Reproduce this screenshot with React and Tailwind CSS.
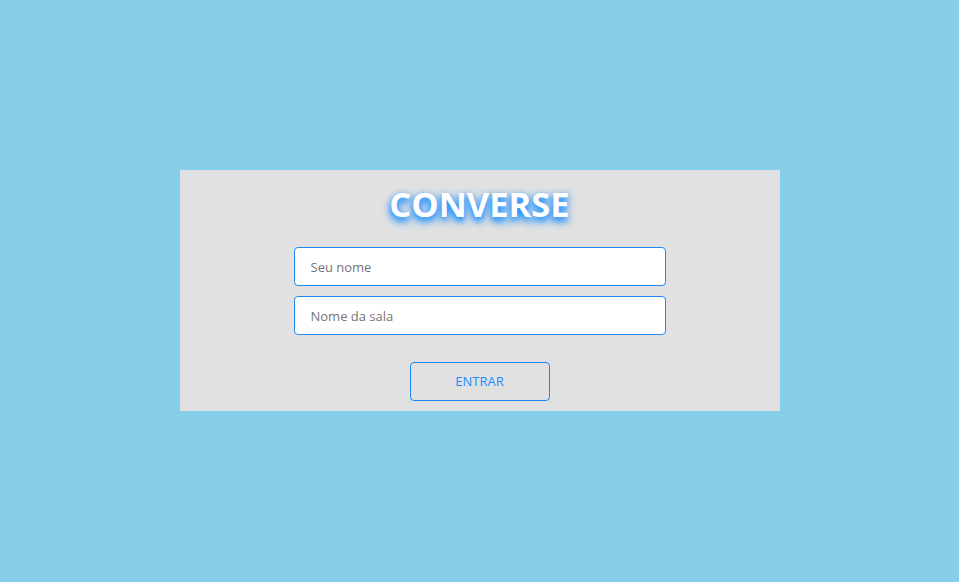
export default function App() {
  return (
    <div className="w-full h-[582px] bg-[#87ceeb] flex flex-col items-center pt-[170px]" style={{ fontFamily: '"Open Sans", "Noto Sans", sans-serif' }}>
      <div className="w-[600px] h-[241px] bg-[#e1e1e1] flex flex-col items-center">
        <h1 className="mt-[13px] h-[42px] flex items-center text-[34.5px] font-bold text-white leading-none [text-shadow:0_4px_10px_#1e90ff,0_3px_6px_#1e90ff]">CONVERSE</h1>
        <input placeholder="Seu nome" className="mt-[22px] w-[372px] h-[39px] bg-white border border-[#1e88f5] rounded-[4px] px-[16px] text-[13px] text-[#333] placeholder:text-[#757575] outline-none" />
        <input placeholder="Nome da sala" className="mt-[10px] w-[372px] h-[39px] bg-white border border-[#1e88f5] rounded-[4px] px-[16px] text-[13px] text-[#333] placeholder:text-[#757575] outline-none" />
        <button className="mt-[27px] w-[140px] h-[39px] border border-[#1e88f5] rounded-[4px] text-[13px] text-[#1a8cff] bg-transparent">ENTRAR</button>
      </div>
    </div>
  );
}
